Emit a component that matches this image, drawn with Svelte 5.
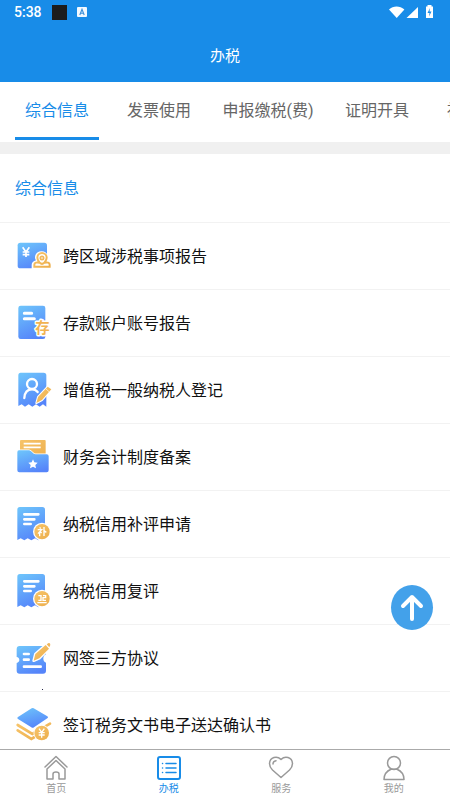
<script>
  const tabs = ['综合信息', '发票使用', '申报缴税(费)', '证明开具', '社保业务'];
  const items = [
    { icon: 'region', label: '跨区域涉税事项报告' },
    { icon: 'deposit', label: '存款账户账号报告' },
    { icon: 'taxpayer', label: '增值税一般纳税人登记' },
    { icon: 'folder', label: '财务会计制度备案' },
    { icon: 'supplement', label: '纳税信用补评申请' },
    { icon: 'review', label: '纳税信用复评' },
    { icon: 'agreement', label: '网签三方协议' },
    { icon: 'delivery', label: '签订税务文书电子送达确认书' }
  ];
  const nav = [
    { icon: 'home', label: '首页' },
    { icon: 'tax', label: '办税' },
    { icon: 'heart', label: '服务' },
    { icon: 'user', label: '我的' }
  ];
  let activeTab = $state(0);
  let activeNav = $state(1);
  let list;
</script>

<svg class="defs" aria-hidden="true">
  <defs>
    <linearGradient id="blue" x1="0.2" y1="0" x2="0.6" y2="1">
      <stop offset="0" stop-color="#6dc2fb" />
      <stop offset="1" stop-color="#5584fa" />
    </linearGradient>
    <linearGradient id="gold" x1="0" y1="0" x2="1" y2="1">
      <stop offset="0" stop-color="#f7c46a" />
      <stop offset="1" stop-color="#ecae4c" />
    </linearGradient>
  </defs>
</svg>

<div class="app">
  <header>
    <div class="status">
      <span class="time">5:38</span>
      <span class="black"></span>
      <svg class="badge" width="10" height="12" viewBox="0 0 10 12">
        <rect y="1" width="10" height="10" rx="1" fill="#f2f9ff" />
        <path d="M2.8 9 5 3.2 7.2 9M3.5 7.2h3" fill="none" stroke="#3c8fd8" stroke-width="1.1" />
      </svg>
      <svg class="signals" width="48" height="16" viewBox="0 0 48 16">
        <path d="M1 5.400C5 1.500 12 1.500 16.400 5.400L8.700 14Z" fill="#fff" />
        <path d="M18.500 14 30 3v11Z" fill="#fff" />
        <path d="M39.500 1h4v1.500H45V14h-7V2.500h1.500Z" fill="#fff" />
        <path d="m42 4-2.500 5h2l-.5 3.500 2.500-5h-2Z" fill="#188ce8" />
      </svg>
    </div>
    <h1>办税</h1>
  </header>

  <div class="tabs" role="tablist">
    {#each tabs as tab, i}
      <button role="tab" class:wide={tab.length > 4} class:active={activeTab === i} aria-selected={activeTab === i} onclick={() => (activeTab = i)}>{tab}</button>
    {/each}
  </div>

  <main bind:this={list}>
    <h2>综合信息</h2>
    <ul>
      {#each items as item}
        <li class:marked={item.icon === 'agreement'}>
          <a href="#{item.icon}">
            <svg class="icon" viewBox="0 0 120 120" aria-hidden="true">
              {#if item.icon === 'region'}
                <rect x="14" y="20" width="88" height="77" rx="8" fill="url(#blue)" />
                <path d="m29 34 10 14 10-14M39 48v15M29 48h20M29 56h20" fill="none" stroke="#fff" stroke-width="5" />
                <path d="M86 46c-12 0-20 8-20 18 0 4 1 7 3 9-8 2-13 7-13 14v14h58V87c0-7-5-12-12-14 2-2 3-5 3-9 0-10-8-18-19-18Z" fill="#fff" />
                <path d="M79 79c-3-4-6-8-6-14a14 14 0 0 1 28 0c0 6-3 10-6 14M80 80c-9-2-16 0-16 6v6h46v-6c0-6-7-8-16-6-4 4-10 4-14 0Z" fill="none" stroke="url(#gold)" stroke-width="6" />
                <circle cx="87" cy="66" r="5" fill="none" stroke="#f0b65a" stroke-width="5" />
              {:else if item.icon === 'deposit'}
                <rect x="16" y="8" width="81" height="100" rx="7" fill="url(#blue)" />
                <path d="M34 31h22M34 47h30" stroke="#fff" stroke-width="9" stroke-linecap="round" />
                <text x="67" y="91" font-size="43" font-weight="700" fill="#f1b352" stroke="#fff" stroke-width="9" stroke-linejoin="round" paint-order="stroke">存</text>
              {:else if item.icon === 'taxpayer'}
                <path d="M23 8h69q8 0 8 8v94l-10-7-10 7-11-7-11 7-11-7-11 7-10-7-10 5V16q0-8 7-8Z" fill="url(#blue)" />
                <circle cx="57" cy="42" r="15" fill="none" stroke="#fff" stroke-width="7" />
                <path d="M34 84c1-18 10-26 23-26 8 0 13 3 17 8" fill="none" stroke="#fff" stroke-width="7" stroke-linecap="round" />
                <path d="m70 99 5-18 29-31 11 8-28 32Z" fill="url(#gold)" stroke="#fff" stroke-width="6" stroke-linejoin="round" paint-order="stroke" />
                <path d="m98 56 10 9" stroke="#fff" stroke-width="2" />
              {:else if item.icon === 'folder'}
                <rect x="21" y="9" width="77" height="60" rx="3" fill="url(#gold)" />
                <path d="M32 20h51M32 31h51" stroke="#fff" stroke-width="5" />
                <path d="M18 40h30c7 0 12 12 20 12h33q6 0 6 6v42q0 6-6 6H19q-6 0-6-6V46q0-6 5-6Z" fill="url(#blue)" stroke="#fff" stroke-width="5" paint-order="stroke" />
                <path d="m60 67 4 9 10 1-7 7 2 10-9-5-9 5 2-10-7-7 10-1Z" fill="#fff" />
              {:else if item.icon === 'supplement' || item.icon === 'review'}
                <path d="M21 9h67q8 0 8 8v91l-10-5-10 6-10-6-11 6-11-6-10 6-11-6-10 5V17q0-8 8-8Z" fill="url(#blue)" />
                <path d="M34 31h42M34 46h30M34 60h19" stroke="#fff" stroke-width="8" stroke-linecap="round" />
                <circle cx="87" cy="83" r="23" fill="url(#gold)" stroke="#fff" stroke-width="8" paint-order="stroke" />
                {#if item.icon === 'supplement'}
                  <path d="M80 70l3 4M74 77h12L75 89M80 83v14M82 83l4 4M93 69v27M93 80l7 5" fill="none" stroke="#fff" stroke-width="4" />
                {:else}
                  <path d="M76 74h8v14h-8M90 74h8v6h-8v8h9M73 95h28" fill="none" stroke="#fff" stroke-width="4" />
                {/if}
              {:else if item.icon === 'agreement'}
                <path d="M20 24h70q9 0 9 9v16c-6 2-8 7-8 13s3 9 8 12v24q0 9-9 9H20q-9 0-9-9V75c5-2 8-4 8-9s-3-8-8-9V33q0-9 9-9Z" fill="url(#blue)" />
                <path d="M33 48h14M33 65h14M33 86h50" stroke="#fff" stroke-width="8" stroke-linecap="round" />
                <path d="m62 68 5-20 31-27 10 11-29 29Z" fill="url(#gold)" stroke="#fff" stroke-width="8" stroke-linejoin="round" paint-order="stroke" />
                <path d="m101 19 6-4q5-1 5 6l-3 7Z" fill="#f0b65a" />
              {:else}
                <path d="m14 60 44 27 53-31M14 76l41 26 20-12" fill="none" stroke="url(#gold)" stroke-width="8" stroke-linecap="round" />
                <path d="M56 10q3-2 6 0l41 24q5 3 0 6L63 67q-4 3-8 0L15 42q-5-3 0-6Z" fill="url(#blue)" stroke="#fff" stroke-width="5" paint-order="stroke" />
                <circle cx="86" cy="84" r="22" fill="url(#gold)" stroke="#fff" stroke-width="5" paint-order="stroke" />
                <path d="m78 71 8 11 8-11M86 82v16M77 83h18M77 90h18" fill="none" stroke="#fff" stroke-width="4" />
              {/if}
            </svg>
            <span>{item.label}</span>
          </a>
        </li>
      {/each}
    </ul>
  </main>

  <button class="top" aria-label="返回顶部" onclick={() => list.scrollTo({ top: 0 })}>
    <svg width="24" height="28" viewBox="0 0 24 28" fill="none" stroke="#fff" stroke-width="4" stroke-linecap="round" stroke-linejoin="round">
      <path d="M12 25V3M3 12l9-9 9 9" />
    </svg>
  </button>

  <nav>
    {#each nav as item, i}
      <a href="#{item.icon}" class:active={activeNav === i} onclick={() => (activeNav = i)}>
        <svg width="26" height="26" viewBox="0 0 26 26" fill="none" stroke="currentColor" stroke-width="1.500" stroke-linejoin="round" stroke-linecap="round" aria-hidden="true">
          {#if item.icon === 'home'}
            <path d="M2 12 13 1.500 24 12M4 14l9-8.500 9 8.500v10h-6v-5q0-2-3-2t-3 2v5H4Z" />
          {:else if item.icon === 'tax'}
            <rect x="2" y="2" width="22" height="22" rx="2" stroke-width="2" />
            <path d="M10 8.500h10M10 13h10M10 17.500h10M6.500 8.500h.1M6.500 13h.1M6.500 17.500h.1" />
          {:else if item.icon === 'heart'}
            <path d="M13 4.500C9 .5 2 2 1.500 8.500c0 3 1 4.500 3 6.500l8.500 7.500 8.500-7.500c2-2 3-3.500 3-6.500C24 2 17 .5 13 4.500ZM5 9c0-1.500 1-3 3-3.300" />
          {:else}
            <circle cx="13" cy="8" r="6.500" />
            <path d="M3 24.500c0-6 3-8.500 7-10.200h6c4 1.700 7 4.200 7 10.200Z" />
          {/if}
        </svg>
        <span>{item.label}</span>
      </a>
    {/each}
  </nav>
</div>

<style>
  :global(body) {
    margin: 0;
    font-family: Roboto, "Noto Sans CJK SC", sans-serif;
    background: #fff;
  }
  .defs {
    position: absolute;
    width: 0;
    height: 0;
  }
  .app {
    position: relative;
    display: flex;
    flex-direction: column;
    height: 100vh;
    overflow: hidden;
  }
  header {
    flex: none;
    background: #188ce8;
    color: #fff;
  }
  .status {
    display: flex;
    align-items: center;
    height: 24px;
    padding: 0 14px;
  }
  .time {
    font-size: 14px;
    font-weight: 500;
    line-height: 24px;
  }
  .black {
    width: 15px;
    height: 15px;
    margin-left: 10px;
    background: #1c1c1c;
  }
  .badge {
    margin-left: 10px;
  }
  .signals {
    margin-left: auto;
  }
  h1 {
    margin: 0;
    padding-top: 6px;
    font-size: 15px;
    font-weight: 400;
    line-height: 52px;
    text-align: center;
  }
  button {
    border: 0;
    padding: 0;
    font: inherit;
    cursor: pointer;
  }
  .tabs {
    display: flex;
    flex: none;
    height: 60px;
    padding-left: 6px;
    border-bottom: 12px solid #f0f0f0;
    overflow-x: auto;
    overflow-y: hidden;
    scrollbar-width: none;
  }
  .tabs button {
    position: relative;
    flex: 0 0 102px;
    height: 58px;
    padding-bottom: 4px;
    background: none;
    color: #666;
    font-size: 16px;
    white-space: nowrap;
  }
  .tabs .wide {
    flex-basis: 116px;
  }
  .tabs .active {
    color: #188ce8;
  }
  .tabs .active::after {
    content: "";
    position: absolute;
    left: 9px;
    right: 9px;
    bottom: 0;
    height: 3px;
    background: #188ce8;
  }
  main {
    flex: 1;
    min-height: 0;
    overflow-y: auto;
    scrollbar-width: none;
  }
  h2 {
    margin: 0;
    padding: 2px 15px 0;
    border-bottom: 1px solid #f2f2f2;
    color: #188ce8;
    font-size: 16px;
    font-weight: 400;
    line-height: 66px;
  }
  ul {
    margin: 0;
    padding: 0;
    list-style: none;
  }
  li {
    position: relative;
    border-bottom: 1px solid #f2f2f2;
  }
  .marked::after {
    content: "";
    position: absolute;
    left: 42px;
    bottom: 1px;
    width: 1px;
    height: 1px;
    background: #224;
  }
  li a {
    display: flex;
    align-items: center;
    gap: 10px;
    height: 66px;
    padding: 0 13px;
    color: #111;
    font-size: 16px;
    text-decoration: none;
  }
  li span {
    padding-bottom: 2px;
  }
  .icon {
    flex: none;
    width: 40px;
    height: 40px;
  }
  .top {
    position: absolute;
    right: 17px;
    bottom: 170px;
    display: grid;
    place-items: center;
    width: 42px;
    height: 45px;
    border-radius: 50%;
    background: #43a1ea;
  }
  nav {
    display: flex;
    flex: none;
    height: 50px;
    border-top: 1px solid #aaa;
    background: #fff;
  }
  nav a {
    display: flex;
    flex: 1;
    flex-direction: column;
    align-items: center;
    padding-top: 5px;
    color: #999;
    font-size: 10px;
    line-height: 16px;
    text-decoration: none;
  }
  nav a.active {
    color: #188ce8;
  }
</style>
